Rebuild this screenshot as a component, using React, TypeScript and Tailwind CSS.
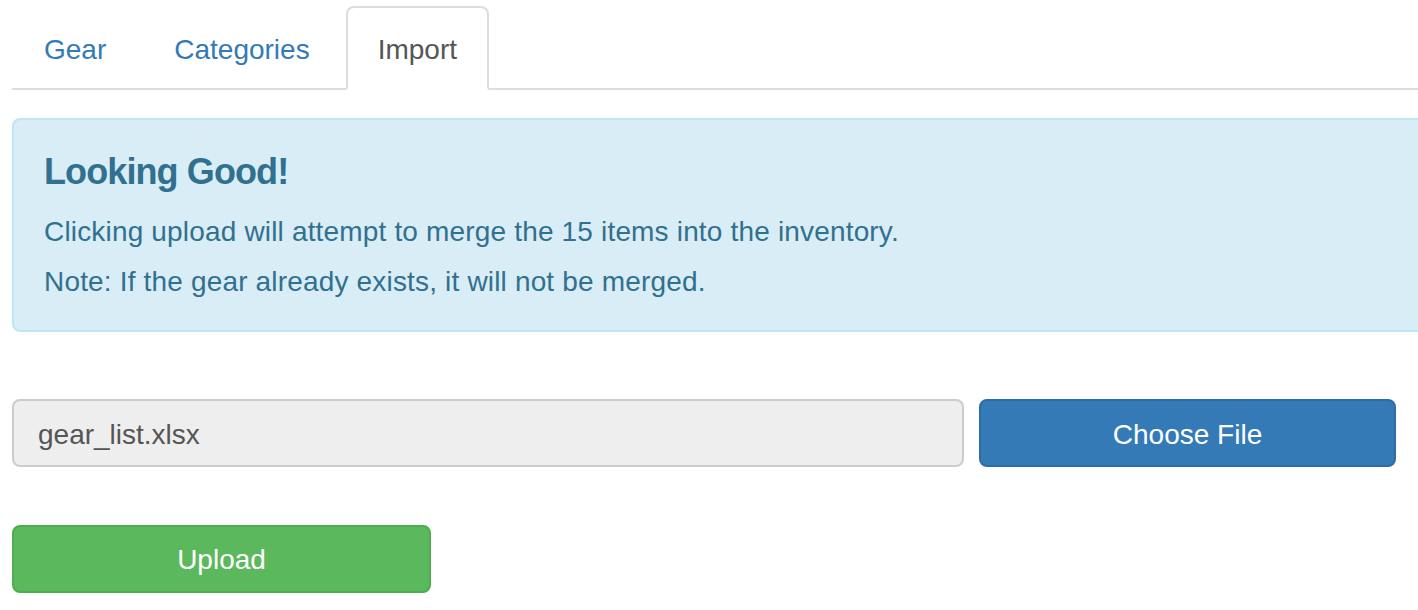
export default function App() {
  const tabs = ['Gear', 'Categories', 'Import'];
  const active = 'Import';

  return (
    <div className="h-[610px] w-[1418px] overflow-hidden bg-white pl-[12px] font-['Liberation_Sans',Arial,sans-serif] text-[28px] leading-[40px] text-[#333]">
      <ul className="mt-[6px] flex border-b-2 border-[#ddd]">
        {tabs.map((t) => (
          <li key={t} className="-mb-[2px] mr-[4px]">
            {t === active ? (
              <a className="block rounded-t-[8px] border-2 border-[#ddd] border-b-transparent bg-white px-[30px] pt-[22px] pb-[18px] text-[#555]">
                {t}
              </a>
            ) : (
              <a className="block rounded-t-[8px] border-2 border-transparent px-[30px] pt-[22px] pb-[18px] text-[#337ab7]">
                {t}
              </a>
            )}
          </li>
        ))}
      </ul>

      <div className="mt-[28px] w-[1440px] rounded-[8px] border-2 border-[#bce8f1] bg-[#d9edf7] px-[30px] pt-[32px] pb-[28px] text-[#31708f]">
        <h4 className="mb-[20px] text-[36px] font-bold leading-[40px] tracking-[-0.9px]">
          Looking Good!
        </h4>
        <p className="tracking-[0.17px]">
          Clicking upload will attempt to merge the 15 items into the inventory.
        </p>
        <p className="mt-[10px] tracking-[0.17px]">
          Note: If the gear already exists, it will not be merged.
        </p>
      </div>

      <div className="mt-[67px] flex gap-[15px]">
        <div className="h-[68px] w-[952px] rounded-[8px] border-2 border-[#ccc] bg-[#eee] px-[24px] pt-[14px] pb-[10px] text-[#555]">
          gear_list.xlsx
        </div>
        <button className="h-[68px] w-[417px] rounded-[8px] border-2 border-[#2e6da4] bg-[#337ab7] pt-[3px] text-white">
          Choose File
        </button>
      </div>

      <button className="mt-[58px] h-[68px] w-[419px] rounded-[8px] border-2 border-[#4cae4c] bg-[#5cb85c] pt-[1px] text-white">
        Upload
      </button>
    </div>
  );
}
